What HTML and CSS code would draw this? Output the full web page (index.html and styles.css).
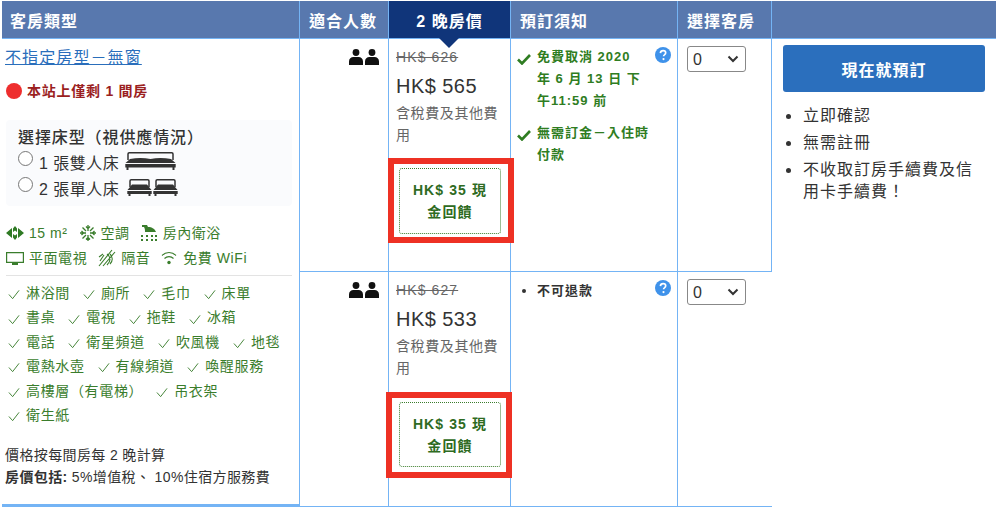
FILE: index.html
```html
<!DOCTYPE html>
<html lang="zh-Hant">
<head>
<meta charset="utf-8">
<title>客房類型</title>
<link rel="stylesheet" href="styles.css">
</head>
<body>
<svg class="defs" width="0" height="0" aria-hidden="true">
  <defs>
    <symbol id="people" viewBox="0 0 30 16">
      <circle cx="7" cy="3.500" r="3.400"/><circle cx="23" cy="3.500" r="3.400"/>
      <path d="M0 16v-3.500C0 9.500 2 8 4.500 8h5C12 8 14 9.500 14 12.500V16zM16 16v-3.500C16 9.500 18 8 20.500 8h5C28 8 30 9.500 30 12.500V16z"/>
    </symbol>
    <symbol id="ok" viewBox="0 0 14 12">
      <path d="M1 6.500l4 4L13 2" fill="none" stroke="#2f7d22" stroke-width="2.600"/>
    </symbol>
    <symbol id="tick" viewBox="0 0 13 11">
      <path d="M1 5.500l4 4.500L12 1" fill="none" stroke="#3a7d2c" stroke-width="1"/>
    </symbol>
    <symbol id="help" viewBox="0 0 16 16">
      <circle cx="8" cy="8" r="8" fill="#3f92ea"/>
      <path d="M5.400 6.100C5.500 4.500 6.600 3.600 8.100 3.600c1.500 0 2.600.9 2.600 2.200 0 1.100-.6 1.600-1.300 2.100-.6.4-.8.700-.8 1.400" fill="none" stroke="#fff" stroke-width="1.700"/>
      <circle cx="8.500" cy="12.100" r="1.100" fill="#fff"/>
    </symbol>
    <symbol id="bed" viewBox="0 0 25 17">
      <path fill="none" stroke="#333" stroke-width="1.500" d="M3 8V2a1.200 1.200 0 0 1 1.200-1.200h16.600A1.200 1.200 0 0 1 22 2v6"/>
      <path fill="#333" d="M5 5.500h15L24.500 11H.5zM.3 12h24.400v3h-1.200V17h-2v-2H3.500v2h-2v-2H.3z"/>
    </symbol>
    <symbol id="bed-wide" viewBox="0 0 51 18">
      <path fill="none" stroke="#333" stroke-width="1.500" d="M3 8V2a1.200 1.200 0 0 1 1.200-1.200h42.600A1.200 1.200 0 0 1 48 2v6"/>
      <path fill="#333" d="M5 7c7-1.500 14-1.500 20.500 0C32 5.500 39 5.500 46 7l4.500 4H.5zM.3 12h50.400v3.500h-1.200V18h-2v-2.500H3.500V18h-2v-2.500H.3z"/>
    </symbol>
  </defs>
</svg>

<table class="rooms">
  <colgroup>
    <col class="c-room"><col class="c-guests"><col class="c-price"><col class="c-notes"><col class="c-select"><col class="c-book">
  </colgroup>
  <thead>
    <tr>
      <th class="th-room">客房類型</th>
      <th>適合人數</th>
      <th class="th-price">2 晚房價</th>
      <th>預訂須知</th>
      <th>選擇客房</th>
      <th></th>
    </tr>
  </thead>
  <tbody>
    <tr>
      <td class="room" rowspan="2">
        <a class="room-name" href="#">不指定房型－無窗</a>
        <p class="scarcity"><span class="dot"></span>本站上僅剩 1 間房</p>
        <div class="bed-box">
          <div class="bed-title">選擇床型（視供應情況）</div>
          <label class="bed-opt"><input type="radio" name="bed"><span>1 張雙人床</span>
            <svg class="ic-bedw"><use href="#bed-wide"/></svg></label>
          <label class="bed-opt"><input type="radio" name="bed"><span>2 張單人床</span>
            <svg class="ic-bed"><use href="#bed"/></svg><svg class="ic-bed"><use href="#bed"/></svg></label>
        </div>
        <div class="facts">
          <span class="fact">
            <svg class="fi fi-size" viewBox="0 0 18 14"><path fill="#2f7a24" d="M0 7l6-5v10zM18 7l-6-5v10zM7 2.500L9 0l2 2.500V6L9 4.500 7 6zM7 11.500L9 14l2-2.500V8L9 9.500 7 8z"/></svg>
            15 m²</span>
          <span class="fact">
            <svg class="fi fi-ac" viewBox="0 0 16 16"><g fill="none" stroke="#3a7d2c" stroke-width="1.300"><path d="M8 0v6M8 10v6M0 8h6M10 8h6M2.500 2.500l3.500 3.500M10 10l3.500 3.500M13.500 2.500L10 6M6 10l-3.500 3.500M6 1.500l2 2 2-2M6 14.500l2-2 2 2M1.500 6l2 2-2 2M14.500 6l-2 2 2 2"/></g></svg>
            空調</span>
          <span class="fact fact-sh">
            <svg class="fi fi-sh" viewBox="0 0 18 16"><path fill="#3a7d2c" d="M2 0h5l1 2c4 0 7 2 8 5H5C5 5 5 4 4 2H2zM1 10h2v2H1zM6 10h2v2H6zM11 10h2v2h-2zM15 10h2v2h-2zM1 14h2v2H1zM6 14h2v2H6zM11 14h2v2h-2zM15 14h2v2h-2z"/></svg>
            房內衛浴</span>
        </div>
        <div class="facts facts-2">
          <span class="fact">
            <svg class="fi fi-tv" viewBox="0 0 18 13"><path fill="none" stroke="#3a7d2c" stroke-width="1.200" d="M.6.6h16.800v9.800H.6z"/><path fill="#3a7d2c" d="M6 11h6v2H6z"/></svg>
            平面電視</span>
          <span class="fact">
            <svg class="fi fi-mute" viewBox="0 0 18 18"><g fill="none" stroke="#3a7d2c" stroke-width="1.100"><path d="M1 17L14 1M5 17L17 3M1 8l4-3M2 12l4-6M9 5c4 3 4 7 0 11M12 5c3 3 3 7 0 10"/></g></svg>
            隔音</span>
          <span class="fact fact-wifi">
            <svg class="fi fi-wifi" viewBox="0 0 16 14"><g fill="none" stroke="#3a7d2c" stroke-width="1.100"><path d="M1 4.500c4-4 10-4 14 0M3.500 7.500c2.500-2.500 6.500-2.500 9 0"/></g><circle cx="8" cy="11.500" r="1.700" fill="#3a7d2c"/></svg>
            免費 WiFi</span>
        </div>
        <ul class="amen">
          <li><svg class="tick"><use href="#tick"/></svg>淋浴間</li>
          <li><svg class="tick"><use href="#tick"/></svg>廁所</li>
          <li><svg class="tick"><use href="#tick"/></svg>毛巾</li>
          <li><svg class="tick"><use href="#tick"/></svg>床單</li>
          <li><svg class="tick"><use href="#tick"/></svg>書桌</li>
          <li><svg class="tick"><use href="#tick"/></svg>電視</li>
          <li><svg class="tick"><use href="#tick"/></svg>拖鞋</li>
          <li><svg class="tick"><use href="#tick"/></svg>冰箱</li>
          <li><svg class="tick"><use href="#tick"/></svg>電話</li>
          <li><svg class="tick"><use href="#tick"/></svg>衛星頻道</li>
          <li><svg class="tick"><use href="#tick"/></svg>吹風機</li>
          <li><svg class="tick"><use href="#tick"/></svg>地毯</li>
          <li><svg class="tick"><use href="#tick"/></svg>電熱水壺</li>
          <li><svg class="tick"><use href="#tick"/></svg>有線頻道</li>
          <li><svg class="tick"><use href="#tick"/></svg>喚醒服務</li>
          <li><svg class="tick"><use href="#tick"/></svg>高樓層（有電梯）</li>
          <li><svg class="tick"><use href="#tick"/></svg>吊衣架</li>
          <li><svg class="tick"><use href="#tick"/></svg>衛生紙</li>
        </ul>
        <p class="foot">價格按每間房每 2 晚計算</p>
        <p class="foot"><b>房價包括:</b> 5%增值稅、 10%住宿方服務費</p>
      </td>
      <td class="guests"><svg class="people"><use href="#people"/></svg></td>
      <td class="price">
        <div class="was">HK$ 626</div>
        <div class="now">HK$ 565</div>
        <div class="tax">含稅費及其他費用</div>
        <div class="cash">HK$ 35 現金回饋<span class="mark"></span></div>
      </td>
      <td class="notes">
        <svg class="help"><use href="#help"/></svg>
        <div class="good"><svg class="ok"><use href="#ok"/></svg><span>免費取消 2020<br>年 6 月 13 日 下<br>午11:59 前</span></div>
        <div class="good"><svg class="ok"><use href="#ok"/></svg><span>無需訂金－入住時付款</span></div>
      </td>
      <td class="pick"><select class="qty"><option>0</option><option>1</option></select></td>
      <td class="book" rowspan="2">
        <button class="cta" type="button">現在就預訂</button>
        <ul class="perks">
          <li>立即確認</li>
          <li>無需註冊</li>
          <li>不收取訂房手續費及信用卡手續費！</li>
        </ul>
      </td>
    </tr>
    <tr>
      <td class="guests"><svg class="people"><use href="#people"/></svg></td>
      <td class="price">
        <div class="was">HK$ 627</div>
        <div class="now">HK$ 533</div>
        <div class="tax">含稅費及其他費用</div>
        <div class="cash cash-2">HK$ 35 現金回饋<span class="mark mark-2"></span></div>
      </td>
      <td class="notes">
        <svg class="help"><use href="#help"/></svg>
        <div class="plain"><i class="bullet"></i><span>不可退款</span></div>
      </td>
      <td class="pick"><select class="qty"><option>0</option><option>1</option></select></td>
    </tr>
  </tbody>
</table>
</body>
</html>
```
FILE: styles.css
```css
* { box-sizing: border-box; }
html, body { margin: 0; padding: 0; background: #fff; }
body {
  width: 996px;
  height: 510px;
  overflow: hidden;
  padding: 1px 0 0 2px;
  font-family: "Liberation Sans", "Noto Sans CJK TC", sans-serif;
  font-size: 14px;
  color: #333;
}
.defs { position: absolute; }

.rooms { width: 994px; table-layout: fixed; border-collapse: separate; border-spacing: 0; }
.c-room { width: 298px; }
.c-guests { width: 89px; }
.c-price { width: 122px; }
.c-notes { width: 167px; }
.c-select { width: 94px; }
.c-book { width: 224px; }

th {
  height: 38px;
  padding: 0 0 0 9px;
  background: #5878ae;
  color: #fff;
  font-size: 16px;
  font-weight: 700;
  letter-spacing: 1px;
  text-align: left;
  border-right: 1px solid #74b4f5;
  border-bottom: 1px solid #74b4f5;
}
th:last-child { border-right: 0; }
.th-room { padding-left: 8px; }
.th-price { position: relative; padding: 0; text-align: center; background: #10357a; }
.th-price::after {
  content: "";
  position: absolute;
  left: 50px;
  top: 37px;
  border-left: 10px solid transparent;
  border-right: 10px solid transparent;
  border-top: 10px solid #10357a;
}

td {
  padding: 0;
  vertical-align: top;
  border-right: 1px solid #74b4f5;
  border-bottom: 1px solid #74b4f5;
}
td:last-child { border-right: 0; }
tbody tr:first-child td { height: 233px; }
tbody tr:last-child td { height: 235px; }
td.room { padding: 7px 6px 0 3px; border-bottom: 3px solid #74b4f5; }
td.book { border-bottom: 0; padding: 6px 10px 0 11px; }

.room-name { display: block; font-size: 16px; letter-spacing: 1.100px; line-height: 24px; color: #2a6ebb; }
.scarcity { display: flex; align-items: center; margin: 9px 0 0; line-height: 24px; font-weight: 700; letter-spacing: .75px; color: #9b1f1f; }
.dot { width: 16px; height: 16px; margin: 0 5px 0 1px; border-radius: 50%; background: #ee2e2e; }

.bed-box { margin: 17px 0 0 1px; width: 286px; height: 86px; padding: 7px 12px 0; background: #fafbfd; border-radius: 4px; font-size: 16px; }
.bed-title { line-height: 22px; font-weight: 500; letter-spacing: .9px; }
.bed-opt { display: flex; align-items: center; height: 26px; color: #333; letter-spacing: .5px; }
.bed-opt input { width: 15px; height: 15px; margin: 0 6px 7px 0; accent-color: #555; }
.ic-bedw { width: 51px; height: 18px; margin-left: 6px; margin-bottom: 2px; }
.ic-bed { width: 25px; height: 17px; margin: 0 0 2px 1px; }
.ic-bed:first-of-type { margin-left: 8px; }

.facts { display: flex; gap: 12px; margin: 15px 0 0 1px; color: #3a7d2c; line-height: 24px; letter-spacing: .55px; }
.facts-2 { margin-top: 1px; gap: 11px; }
.fact { display: flex; align-items: center; gap: 5px; }
.fact-sh { margin-left: -2px; }
.fact-wifi { gap: 6px; }
.fi { flex: none; }
.fi-size { width: 18px; height: 14px; }
.fi-ac { width: 16px; height: 16px; }
.fi-sh { width: 18px; height: 16px; }
.fi-tv { width: 18px; height: 13px; }
.fi-mute { width: 18px; height: 18px; }
.fi-wifi { width: 16px; height: 14px; }

.amen { display: flex; flex-wrap: wrap; gap: 0 13px; list-style: none; margin: 5px 0 0 1px; padding: 5px 0 0 2px; width: 286px; border-top: 1px solid #e3e3e3; line-height: 24.400px; letter-spacing: .65px; color: #3a7d2c; }
.amen li { display: flex; align-items: center; }
.tick { width: 12px; height: 11px; margin-right: 6px; margin-top: 3px; }

.foot { margin: 0; line-height: 22px; letter-spacing: .38px; }
.amen + .foot { margin-top: 17px; }
.foot b { font-weight: 700; }

.guests { text-align: right; padding: 10px 9px 0 0; }
.people { width: 30px; height: 16px; fill: #111; display: inline-block; }

.price { padding: 8px 6px 0 7px; }
.was { font-size: 14px; letter-spacing: 1.100px; line-height: 20px; color: #666; text-decoration: line-through; }
.now { margin-top: 4px; font-size: 20px; letter-spacing: .45px; line-height: 30px; color: #333; }
.tax { margin-top: 1px; line-height: 22px; letter-spacing: .6px; color: #666; }
.cash {
  position: relative;
  margin: 22px 3px 0 3px;
  height: 66px;
  padding: 10px 8px 0;
  border: 1px dotted #3a7d2c;
  border-radius: 3px;
  font-size: 14px;
  font-weight: 700;
  letter-spacing: 1.100px;
  line-height: 22px;
  text-align: center;
  color: #2e6b22;
}
.cash-2 { margin-top: 23px; height: 65px; }
.mark { position: absolute; inset: -11px -14px -10px -12px; border: 6px solid #ee3124; }
.mark-2 { inset: -11px -12px -12px -14px; }

.notes { position: relative; padding: 7px 6px 0 6px; font-size: 13px; font-weight: 700; letter-spacing: 1px; line-height: 22px; }
.help { position: absolute; top: 8px; right: 6px; width: 16px; height: 16px; }
.good { display: flex; color: #2f7d22; margin-bottom: 10px; }
.good span { width: 116px; }
.ok { flex: none; width: 14px; height: 12px; margin: 7px 6px 0 0; }
.plain { display: flex; margin-top: 1px; color: #333; }
.plain span { margin-left: 11px; }
.bullet { flex: none; width: 4px; height: 4px; margin: 9px 0 0 5px; border-radius: 50%; background: #333; }

.pick { padding: 7px 0 0 9px; }
.qty {
  appearance: none;
  display: block;
  width: 59px;
  height: 26px;
  padding: 0 0 0 5px;
  font: 16px "Liberation Sans", sans-serif;
  color: #333;
  background: #fff url("data:image/svg+xml,%3Csvg xmlns='http://www.w3.org/2000/svg' width='12' height='8'%3E%3Cpath d='M1.500 1.500L6 6l4.500-4.500' fill='none' stroke='%23333' stroke-width='2'/%3E%3C/svg%3E") no-repeat right 6px center;
  border: 1px solid #888;
  border-radius: 3px;
}

.cta { display: block; width: 202px; height: 47px; border: 0; border-radius: 3px; background: #2b6fbd; color: #fff; font: 700 16px "Liberation Sans", "Noto Sans CJK TC", sans-serif; letter-spacing: 1px; }
.perks { list-style: none; margin: 13px 0 0; padding: 0 0 0 20px; font-size: 16px; letter-spacing: 1px; line-height: 22px; color: #333; }
.perks li { position: relative; margin-bottom: 5px; }
.perks li::before { content: ""; position: absolute; left: -17px; top: 9px; width: 5px; height: 5px; border-radius: 50%; background: #333; }
```
